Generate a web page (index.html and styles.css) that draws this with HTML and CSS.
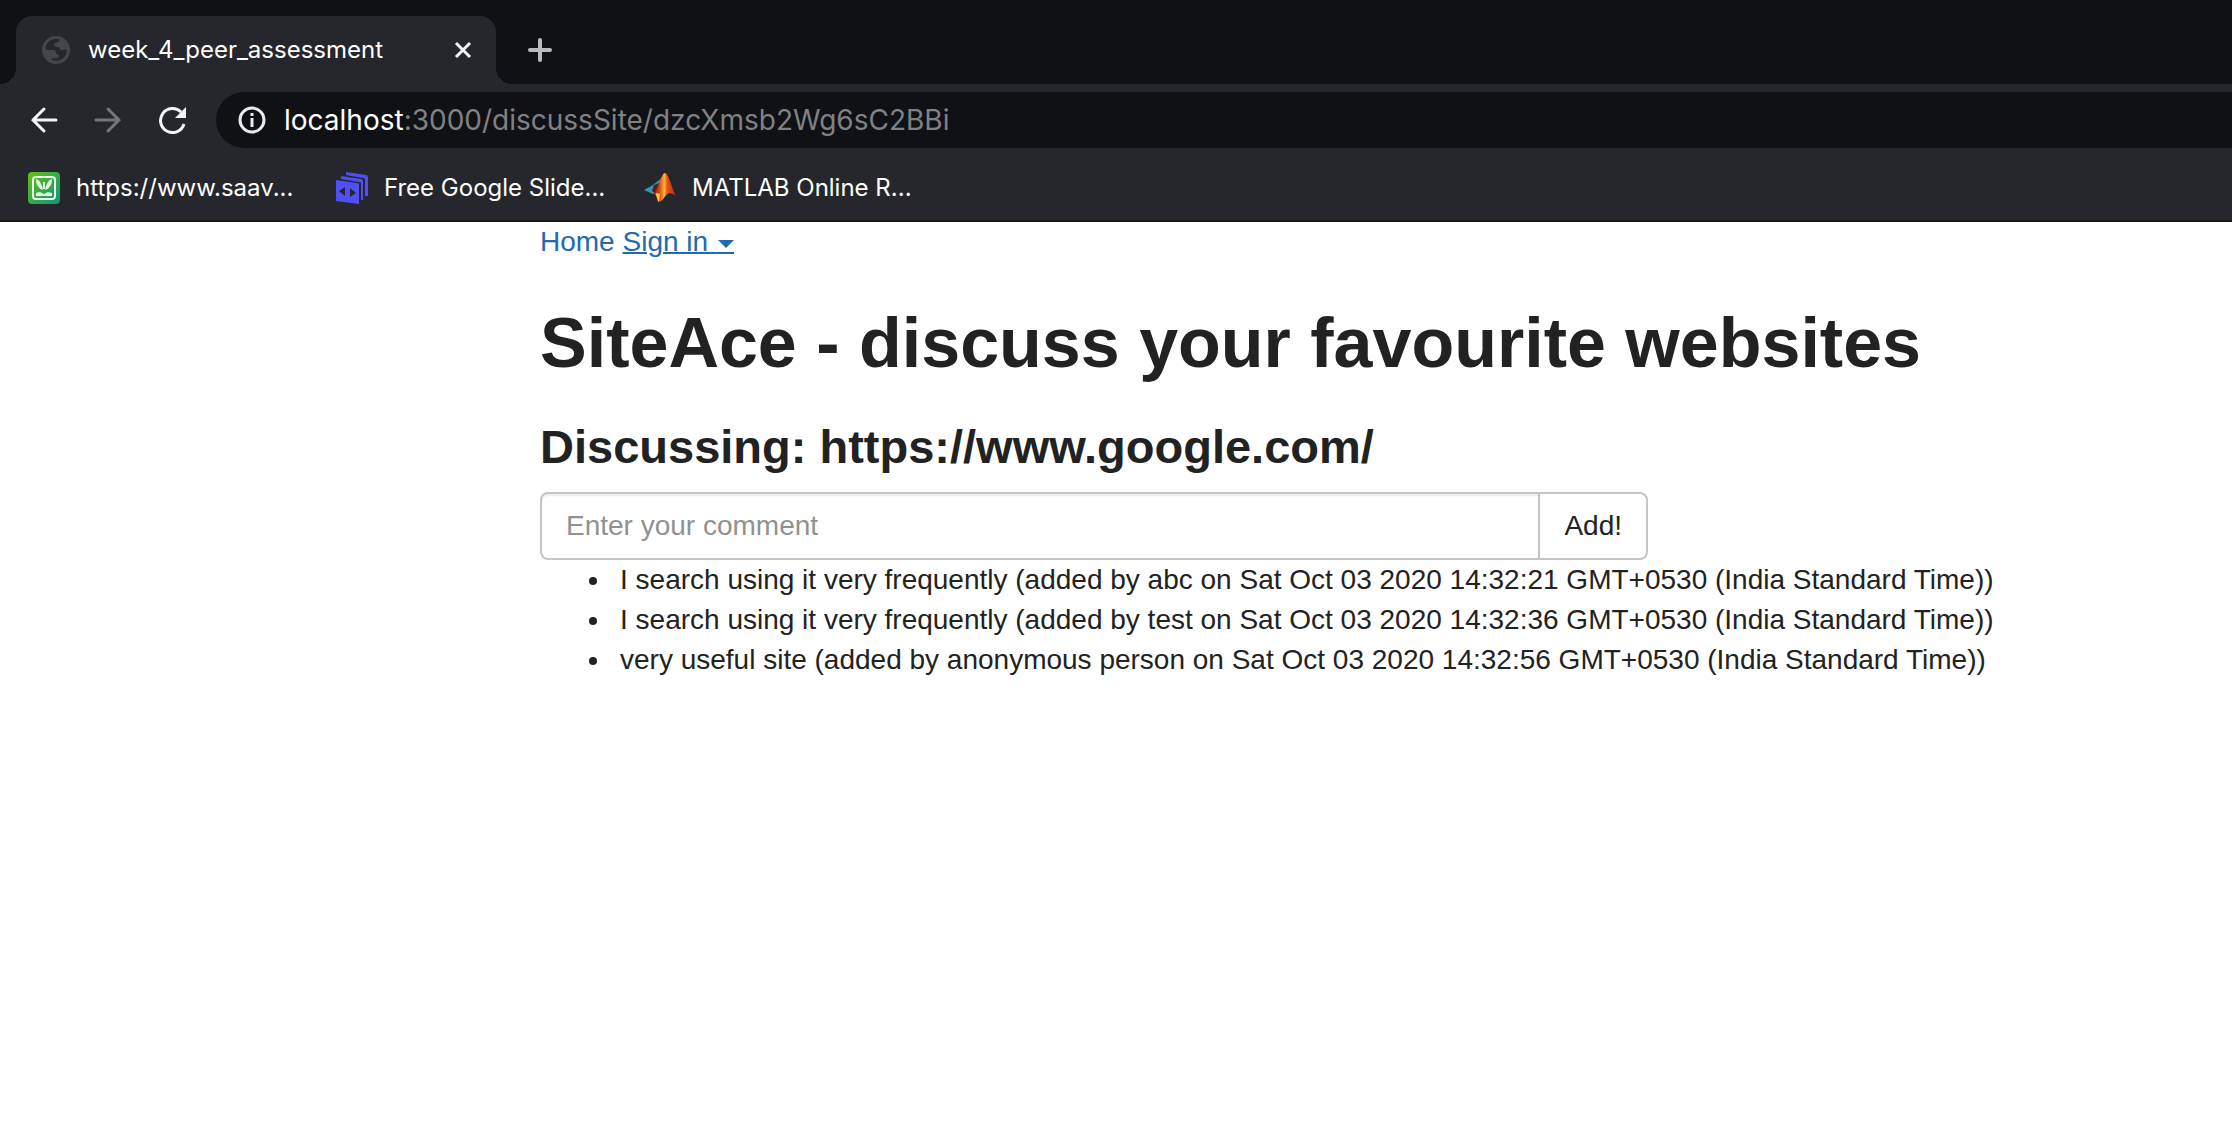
FILE: index.html
```
<!DOCTYPE html>
<html lang="en">
<head>
<meta charset="utf-8">
<title>week_4_peer_assessment</title>
<link rel="stylesheet" href="styles.css">
</head>
<body>
<header class="browser">
  <div class="tab-strip">
    <div class="tab">
      <svg class="tab-icon" viewBox="0 0 28 28" aria-hidden="true"><circle cx="14" cy="14" r="14" fill="#43464b"/><path d="M17 3C12 2 6 4 4 10c-1 3 0 4 2 4h5c2 0 3 1 3 3s3 1 3 3-1 2-4 2c-2 0-4 0-3 2 5 2 11 0 14-5 1-3 1-6-1-6-1 0-1 2-4 1-2-1-1-3-3-3-3 0-4-1-4-3s2-1 4-2c1 0 2-2 1-3z" fill="#26272c"/></svg>
      <span class="tab-title">week_4_peer_assessment</span>
      <button class="icon-button" type="button" aria-label="Close tab"><svg width="18" height="18" viewBox="0 0 18 18"><path d="M2 2l14 14M16 2L2 16" stroke="#f1f3f4" stroke-width="3"/></svg></button>
    </div>
    <button class="icon-button new-tab" type="button" aria-label="New tab"><svg width="24" height="24" viewBox="0 0 24 24"><path d="M12 2v20M2 12h20" stroke="#b9bbbf" stroke-width="4" stroke-linecap="round"/></svg></button>
  </div>
  <div class="toolbar">
    <button class="icon-button" type="button" aria-label="Back"><svg width="28" height="28" viewBox="0 0 28 28"><path d="M26 14H3M14 3L3 14l11 11" fill="none" stroke="#f1f3f4" stroke-width="3" stroke-linecap="round"/></svg></button>
    <button class="icon-button" type="button" aria-label="Forward"><svg width="28" height="28" viewBox="0 0 28 28"><path d="M2 14h23M14 3l11 11-11 11" fill="none" stroke="#75767a" stroke-width="3" stroke-linecap="round"/></svg></button>
    <button class="icon-button" type="button" aria-label="Reload"><svg width="28" height="28" viewBox="0 0 28 28"><path d="M26 18A12 12 0 1 1 23 6" fill="none" stroke="#f1f3f4" stroke-width="3"/><path d="M28 1v11H17z" fill="#f1f3f4"/></svg></button>
    <div class="address">
      <svg width="28" height="28" viewBox="0 0 28 28" aria-hidden="true"><circle cx="14" cy="14" r="12" fill="none" stroke="#e8eaed" stroke-width="3"/><path d="M14 12v9M14 7v3" stroke="#e8eaed" stroke-width="3"/></svg>
      <span class="url"><span class="host">localhost</span>:3000/discussSite/dzcXmsb2Wg6sC2BBi</span>
    </div>
  </div>
  <nav class="bookmarks" aria-label="Bookmarks">
    <a class="bookmark" href="#"><svg width="32" height="32" viewBox="0 0 32 32"><defs><linearGradient id="leaf" x1="0" y1="0" x2="1" y2="1"><stop offset="0" stop-color="#65c018"/><stop offset="1" stop-color="#08967d"/></linearGradient></defs><rect width="32" height="32" rx="4" fill="url(#leaf)"/><rect x="5" y="5" width="22" height="22" rx="3" fill="none" stroke="#f2fff0" stroke-width="2"/><path d="M8 7q5 1 7 11Q8 16 8 7zM24 7q-5 1-7 11 7-2 7-11zM15 10h2v7h-2zM8 21l4-1 4 2 4-2 4 1v3H8z" fill="#e0f7dc"/></svg><span>https://www.saav...</span></a>
    <a class="bookmark" href="#"><svg width="32" height="32" viewBox="0 0 32 32"><g fill="#504ff5"><path d="M0 8l21 3q2 0 2 2v19L0 29z"/><path d="M5 4l20 3q2 0 2 2v19h-2V12q0-2-2-2L5 7z"/><path d="M10 0l20 3q2 0 2 2v19h-3V8q0-2-2-2L10 3z"/></g><path d="M9 15v9l-6-5zM14 16v9l6-4z" fill="#26272c"/></svg><span>Free Google Slide...</span></a>
    <a class="bookmark" href="#"><svg width="32" height="32" viewBox="0 0 32 32"><defs><linearGradient id="peak"><stop offset="0" stop-color="#7b160f"/><stop offset=".28" stop-color="#d9480f"/><stop offset=".5" stop-color="#ffb33b"/><stop offset=".62" stop-color="#e65012"/><stop offset="1" stop-color="#b92b0c"/></linearGradient></defs><path d="M0 18l9-5Q15 9 21 2l-8 19-4 1z" fill="#319abb"/><path d="M10 13l5-2 4-5-7 16-4-3z" fill="#53231f"/><path d="M9 22c5-2 8-21 12-21 4 1 6 14 11 23-5-4-9-4-12 2-2 3-5 4-6 4-1-5-2-8-5-8z" fill="url(#peak)"/><path d="M13 21l3 1-1 8c-2-1-2-7-4-8z" fill="#ffc43b"/></svg><span>MATLAB Online R...</span></a>
  </nav>
</header>
<main class="page">
  <nav class="site-nav"><a href="#">Home</a> <a class="sign-in" href="#">Sign in <span class="caret"></span></a></nav>
  <h1>SiteAce - discuss your favourite websites</h1>
  <h2>Discussing: https://www.google.com/</h2>
  <form class="comment-form">
    <input type="text" aria-label="Comment" placeholder="Enter your comment">
    <button type="button">Add!</button>
  </form>
  <ul class="comments">
    <li>I search using it very frequently (added by abc on Sat Oct 03 2020 14:32:21 GMT+0530 (India Standard Time))</li>
    <li>I search using it very frequently (added by test on Sat Oct 03 2020 14:32:36 GMT+0530 (India Standard Time))</li>
    <li>very useful site (added by anonymous person on Sat Oct 03 2020 14:32:56 GMT+0530 (India Standard Time))</li>
  </ul>
</main>
</body>
</html>
```
FILE: styles.css
```
* { box-sizing: border-box; }
body { margin: 0; background: #fff; color: #222; font: 28px/40px "Liberation Sans", Arial, sans-serif; }
svg { display: block; flex: none; }

.browser { background: #26272c; color: #fff; font-family: Inter, sans-serif; border-bottom: 2px solid #171516; overflow: hidden; }
.tab-strip { display: flex; align-items: flex-end; height: 84px; padding-left: 16px; background: #101115; }
.tab { position: relative; display: flex; align-items: center; width: 480px; height: 68px; padding: 0 24px 0 26px; border-radius: 16px 16px 0 0; background: #26272c; }
.tab::before, .tab::after { content: ""; position: absolute; bottom: 0; width: 16px; height: 16px; }
.tab::before { right: 100%; background: radial-gradient(circle at 0 0, #101115 16px, #26272c 16px); }
.tab::after { left: 100%; background: radial-gradient(circle at 100% 0, #101115 16px, #26272c 16px); }
.tab-icon { width: 28px; height: 28px; }
.tab-title { flex: 1; margin-left: 18px; font-size: 24px; }
.icon-button { padding: 0; border: 0; background: none; }
.new-tab { margin: 0 0 22px 32px; }
.toolbar { display: flex; align-items: center; gap: 36px; padding: 8px 0 0 30px; }
.address { display: flex; flex: 1; align-items: center; gap: 18px; height: 56px; margin-left: -6px; padding-left: 22px; border-radius: 28px 0 0 28px; background: #101115; }
.url { color: #808184; font-size: 28px; }
.host { color: #fff; }
.bookmarks { display: flex; gap: 44px; padding: 20px 28px 12px; }
.bookmark { display: flex; align-items: center; gap: 16px; width: 264px; color: #fff; font-size: 24px; text-decoration: none; white-space: nowrap; }

.page { max-width: 1940px; margin: 0 auto; padding-left: 394px; }
.site-nav a { color: #2369ad; text-decoration: none; }
.site-nav .sign-in { text-decoration: underline; text-decoration-thickness: 2px; }
.caret { position: relative; display: inline-block; margin-left: 2px; border: 8px solid transparent; border-top-color: currentColor; border-bottom: 0; vertical-align: middle; }
.caret::after { content: ""; position: absolute; top: 4px; left: -10px; width: 18px; height: 2px; background: currentColor; }
h1, h2 { font-weight: 700; }
h1 { margin: 40px 0 0; font-size: 70px; line-height: 82px; }
h2 { margin: 36px 0 18px; font-size: 47px; line-height: 54px; }
.comment-form { display: flex; max-width: 1108px; height: 68px; }
.comment-form input, .comment-form button { border: 2px solid #c5c5c5; background: #fff; color: #222; font: inherit; }
.comment-form input { flex: 1; min-width: 0; padding: 12px 24px; border-right: 0; border-radius: 8px 0 0 8px; box-shadow: inset 0 2px 2px rgba(0, 0, 0, .07); }
.comment-form input::placeholder { color: #919191; opacity: 1; }
.comment-form button { padding: 0 24px; border-radius: 0 8px 8px 0; }
.comments { margin: 0; padding-left: 72px; }
.comments li { padding-left: 8px; }
```
